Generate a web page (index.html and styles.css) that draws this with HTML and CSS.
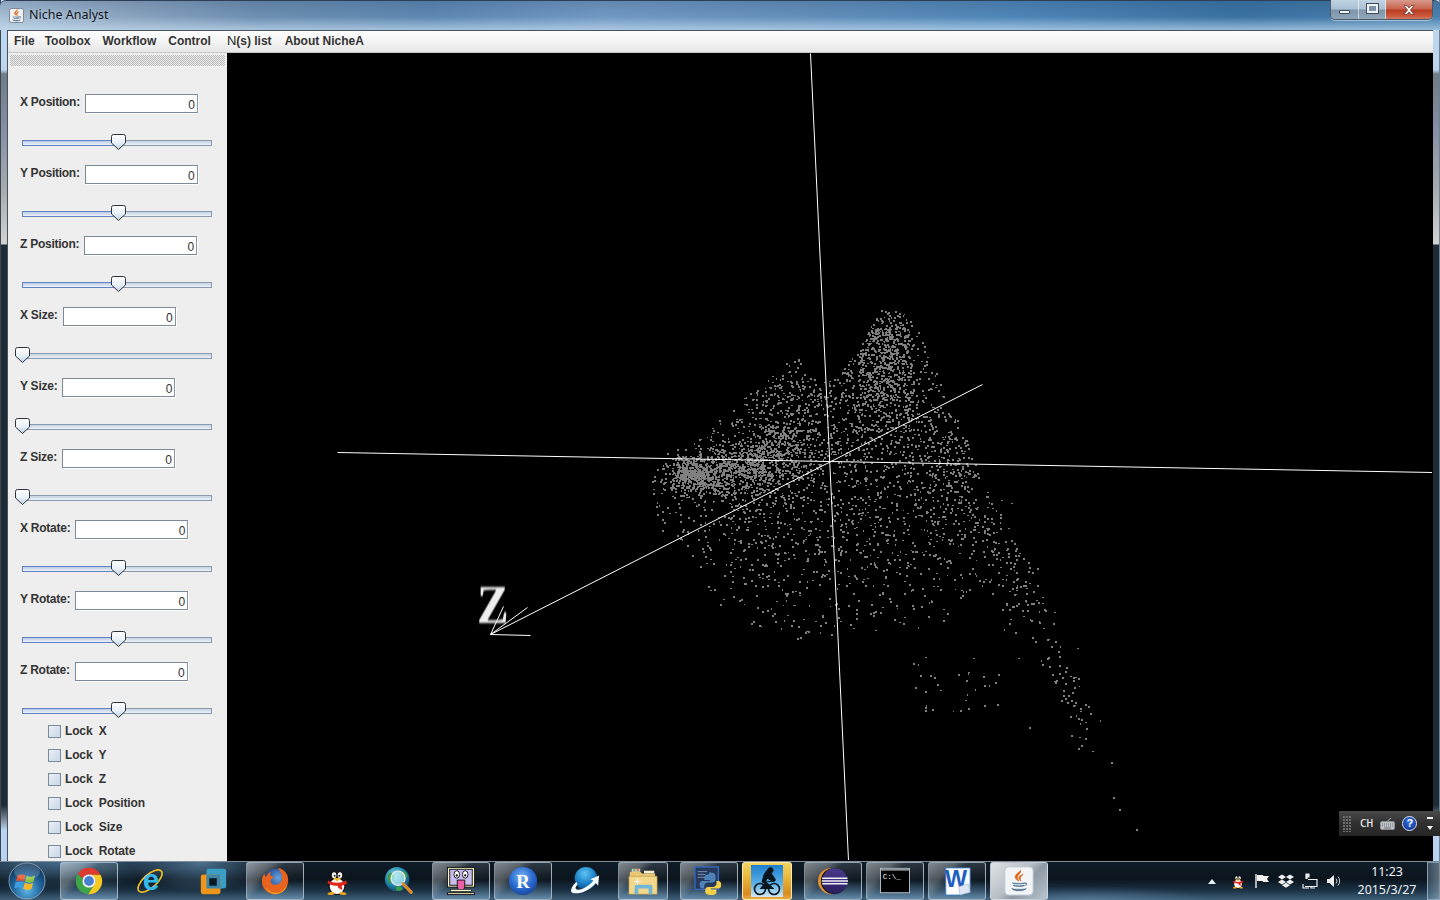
FILE: index.html
```html
<!DOCTYPE html>
<html lang="en">
<head>
<meta charset="utf-8">
<title>Niche Analyst</title>
<link rel="stylesheet" href="styles.css">
</head>
<body>
<svg class="defs" width="0" height="0" aria-hidden="true">
  <defs>
    <linearGradient id="thumbFill" x1="0" y1="0" x2="0" y2="1"><stop offset="0" stop-color="#ffffff"/><stop offset=".55" stop-color="#e8f0f8"/><stop offset="1" stop-color="#b9cde2"/></linearGradient>
    <symbol id="thumb" viewBox="0 0 15 16"><path d="M2.5.5h10a2 2 0 0 1 2 2v6.5L7.5 15.5.5 9V2.500a2 2 0 0 1 2-2z" fill="url(#thumbFill)" stroke="#2d3338"/></symbol>
    <symbol id="javaCup" viewBox="0 0 32 32">
      <path d="M18 3c1 4-5 6-4 10 .4 1.500 1.500 2.500 2 3-3-1-5-3.500-4.500-6 .6-3 5-4 6.500-7zM21 8c-2 2-4 3-3.500 6 .2 1 .8 1.600 1 2-2-1-3-2.500-2.500-4.500.5-2 3-3 5-3.500z" fill="#e2661a" stroke="#e2661a" stroke-width=".9"/>
      <path d="M8 18c4 1.200 12 1.200 15 0l-.5 1c-3 1-11 1-14-.1zM9 21c4 1 10 1 13.500 0l-.5 1c-3 .9-9 .9-12.500 0zM7 25c5 1.600 13 1.600 18 0-1 2-5 3-9 3s-8-1-9-3zM23 18.500c3-1 4 2 0 3.500l1-1c1.500-1 1-2.500-1-2z" fill="#44698c" stroke="#44698c" stroke-width=".5"/>
    </symbol>
    <symbol id="penguin" viewBox="3 0 26 31">
      <ellipse cx="16" cy="17" rx="10" ry="13" fill="#15151a"/>
      <ellipse cx="16" cy="21" rx="7.500" ry="8" fill="#fafafa"/>
      <ellipse cx="13" cy="9.500" rx="2.300" ry="3" fill="#fff"/><ellipse cx="19" cy="9.500" rx="2.300" ry="3" fill="#fff"/>
      <circle cx="13.500" cy="10" r="1" fill="#111"/><circle cx="18.500" cy="10" r="1" fill="#111"/>
      <path d="M12 12.500h8l-4 3.500z" fill="#f5b61a"/>
      <path d="M6.500 15c6 3 13 3 19 0l.8 3c-2 1.500-4 2-5.500 2.200l.7 4.500-4-2-1-2.300c-3.500 0-7-.8-10-2.400z" fill="#e0251b"/>
      <path d="M6 29c1-2.500 6-3 8-1 .3 1.800-6 3-8 1zM26 29c-1-2.500-6-3-8-1-.3 1.800 6 3 8 1z" fill="#f5a81a"/>
    </symbol>
  </defs>
</svg>

<div class="screen">
  <div class="window">
    <header class="titlebar">
      <svg class="title-icon" viewBox="0 0 16 16"><rect x=".5" y=".5" width="15" height="15" rx="2" fill="#eef0f2" stroke="#76818d"/><use href="#javaCup" x="0" y="0" width="16" height="16"/></svg>
      <span class="title-text">Niche Analyst</span>
      <div class="controls">
        <div class="ctl ctl-min"><span class="glyph-min"></span></div>
        <div class="ctl ctl-max"><span class="glyph-max"></span></div>
        <div class="ctl ctl-close"><svg width="16" height="12" viewBox="0 0 16 12"><path d="M3 1.500h3l2 2.500 2-2.500h3l-3.500 4.500 3.500 4.500h-3l-2-2.500-2 2.500h-3l3.500-4.500z" fill="#f4f4f4" stroke="#6d3a35" stroke-width=".8"/></svg></div>
      </div>
    </header>

    <div class="client">
      <nav class="menubar">
        <span class="menu-item">File</span>
        <span class="menu-item">Toolbox</span>
        <span class="menu-item">Workflow</span>
        <span class="menu-item">Control</span>
        <span class="menu-item menu-armed"><span class="menu-n">N</span>(s) list</span>
        <span class="menu-item">About NicheA</span>
      </nav>

      <div class="workarea">
        <aside class="panel">
          <div class="grip"></div>

          <div class="group"><div class="field"><span class="field-label">X Position:</span><div class="field-box">0</div></div><div class="slider slider-mid"><div class="track"><div class="fill"></div></div><svg class="thumb"><use href="#thumb"/></svg></div></div>
          <div class="group"><div class="field"><span class="field-label">Y Position:</span><div class="field-box">0</div></div><div class="slider slider-mid"><div class="track"><div class="fill"></div></div><svg class="thumb"><use href="#thumb"/></svg></div></div>
          <div class="group"><div class="field"><span class="field-label">Z Position:</span><div class="field-box">0</div></div><div class="slider slider-mid"><div class="track"><div class="fill"></div></div><svg class="thumb"><use href="#thumb"/></svg></div></div>
          <div class="group"><div class="field"><span class="field-label">X Size:</span><div class="field-box">0</div></div><div class="slider slider-start"><div class="track"></div><svg class="thumb"><use href="#thumb"/></svg></div></div>
          <div class="group"><div class="field"><span class="field-label">Y Size:</span><div class="field-box">0</div></div><div class="slider slider-start"><div class="track"></div><svg class="thumb"><use href="#thumb"/></svg></div></div>
          <div class="group"><div class="field"><span class="field-label">Z Size:</span><div class="field-box">0</div></div><div class="slider slider-start"><div class="track"></div><svg class="thumb"><use href="#thumb"/></svg></div></div>
          <div class="group"><div class="field"><span class="field-label">X Rotate:</span><div class="field-box">0</div></div><div class="slider slider-mid"><div class="track"><div class="fill"></div></div><svg class="thumb"><use href="#thumb"/></svg></div></div>
          <div class="group"><div class="field"><span class="field-label">Y Rotate:</span><div class="field-box">0</div></div><div class="slider slider-mid"><div class="track"><div class="fill"></div></div><svg class="thumb"><use href="#thumb"/></svg></div></div>
          <div class="group group-last"><div class="field"><span class="field-label">Z Rotate:</span><div class="field-box">0</div></div><div class="slider slider-mid"><div class="track"><div class="fill"></div></div><svg class="thumb"><use href="#thumb"/></svg></div></div>

          <div class="check"><span class="check-box"></span><span class="check-label">Lock  X</span></div>
          <div class="check"><span class="check-box"></span><span class="check-label">Lock  Y</span></div>
          <div class="check"><span class="check-box"></span><span class="check-label">Lock  Z</span></div>
          <div class="check"><span class="check-box"></span><span class="check-label">Lock  Position</span></div>
          <div class="check"><span class="check-box"></span><span class="check-label">Lock  Size</span></div>
          <div class="check"><span class="check-box"></span><span class="check-label">Lock  Rotate</span></div>
        </aside>

        <main class="scene">
          <canvas id="cloud" class="cloud" width="1205" height="807"></canvas>
          <span class="axis-label">Z</span>
        </main>
      </div>
    </div>
  </div>

  <footer class="taskbar">
    <div class="start">
      <svg viewBox="0 0 38 38" width="38" height="38">
        <defs><radialGradient id="orb" cx=".5" cy=".75" r=".75"><stop offset="0" stop-color="#5fb8e8"/><stop offset=".55" stop-color="#1d5f97"/><stop offset="1" stop-color="#0c2c4c"/></radialGradient></defs>
        <circle cx="19" cy="19" r="18" fill="url(#orb)" stroke="#a6c0d4" stroke-opacity=".7"/>
        <path d="M9.500 13.500c3-1.500 5.500-1.200 8 0l-1.500 6c-2.500-1.200-5-1.400-8-.2z" fill="#e8502a"/>
        <path d="M18.500 13.800c2.800 1.500 5.500 1.500 8.500 0l-1.600 6c-3 1.300-5.500 1.200-8.400-.2z" fill="#8ec23b"/>
        <path d="M7.700 20.300c3-1.200 5.500-1 8 .2l-1.500 6c-2.500-1.200-5-1.400-8-.2z" fill="#3c9fe0"/>
        <path d="M16.700 20.800c2.800 1.400 5.500 1.500 8.400.2l-1.600 6c-3 1.300-5.500 1.200-8.300-.2z" fill="#f6b72a"/>
        <ellipse cx="19" cy="9.500" rx="13" ry="8" fill="#fff" fill-opacity=".18"/>
      </svg>
    </div>
    <div class="tasks">
      <div class="task open"><svg class="icon" viewBox="0 0 32 32"><path d="M4 8.500A14 14 0 0 1 28.400 9.500L16 9A7 7 0 0 0 9.500 13.500z" fill="#dd3b2f"/><path d="M28.400 9.500A14 14 0 0 1 15 30L21.500 20A7 7 0 0 0 16 9z" fill="#f8c91f"/><path d="M4 8.500A14 14 0 0 0 15 30L21.500 20A7 7 0 0 1 9.500 13.500z" fill="#3da648"/><circle cx="16" cy="16" r="7" fill="#fff"/><circle cx="16" cy="16" r="5.300" fill="#4a80d0"/></svg></div>
      <div class="task"><svg class="icon" viewBox="0 0 32 32"><ellipse cx="15" cy="16" rx="16" ry="7" transform="rotate(-42 15 16)" fill="none" stroke="#f2bd22" stroke-width="1.800"/><text x="16" y="26" text-anchor="middle" class="ie-e">e</text></svg></div>
      <div class="task"><svg class="icon" viewBox="0 0 32 32"><rect x="9" y="3" width="21" height="21" rx="2.500" fill="#3a9fc6"/><rect x="3" y="9" width="21" height="21" rx="2.500" fill="#f0951c"/><rect x="9" y="9" width="15" height="15" fill="#3f87a8"/><rect x="12" y="13" width="8" height="8" fill="#0b1720"/></svg></div>
      <div class="task open"><svg class="icon" viewBox="0 0 32 32"><defs><radialGradient id="ffx" cx=".6" cy=".4" r=".7"><stop offset="0" stop-color="#6aa3dc"/><stop offset=".6" stop-color="#2b5da8"/><stop offset="1" stop-color="#1e3f80"/></radialGradient></defs><circle cx="17" cy="15" r="12" fill="url(#ffx)"/><path d="M19 2c7 1 12 7 11 15-1 8-7 13-14 13C8 30 2 24 2 16c0-3 1-6 3-8 0 2 .5 3 1.500 3.500C8 8 10 6.500 12 6c-1 1.500-1.500 3-1 4 2 .5 3.500 1.500 3.500 2.500-2 1-3.500 2-3 4 .5 2.500 3 4 6 3.500 3.500-.6 6-3.500 6-7 0-4.500-2-8-4.500-10.500z" fill="#e8641e"/><path d="M6 22c3 5 9 8 15 6 3-1 6-4 8-8-1 6-7 10-13 10-4 0-8-3-10-8z" fill="#f5a31c"/></svg></div>
      <div class="task"><svg class="icon"><use href="#penguin"/></svg></div>
      <div class="task"><svg class="icon" viewBox="0 0 32 32"><defs><radialGradient id="mag" cx=".4" cy=".35" r=".75"><stop offset="0" stop-color="#8be0ee"/><stop offset=".55" stop-color="#1d84ab"/><stop offset="1" stop-color="#0d3d5c"/></radialGradient></defs><circle cx="14" cy="14" r="13" fill="url(#mag)"/><path d="M4 9c3-3 6-2 7 1s-3 5-4 9c-3-2-4-6-3-10zM20 5c3 1 5 4 5 7l-5 1c-2-2-2-5 0-8zM13 22c3-1 6 0 7 3-2 1.500-5 2-7 1z" fill="#3c9c4a"/><circle cx="15" cy="13" r="7.500" fill="#bff0f6" fill-opacity=".7" stroke="#e4e9ea" stroke-width="1.500"/><path d="M20.500 19l8.500 9" stroke="#d98a30" stroke-width="3.500" stroke-linecap="round"/></svg></div>
      <div class="task open"><svg class="icon" viewBox="0 0 32 32"><rect x="1.500" y="1.500" width="29" height="21" fill="#fbf7c8" stroke="#111"/><rect x="4" y="3.500" width="24" height="17" fill="#c9bdf0" stroke="#111"/><ellipse cx="11.500" cy="9" rx="3" ry="4" fill="#fff" stroke="#111"/><ellipse cx="20.500" cy="9" rx="3" ry="4" fill="#fff" stroke="#111"/><circle cx="11.500" cy="10" r="1.200" fill="#111"/><circle cx="20.500" cy="10" r="1.200" fill="#111"/><path d="M12 15h8v7a4 4 0 0 1-8 0z" fill="#ec5fa4" stroke="#111"/><rect x="5" y="25" width="22" height="2" fill="#fbf7c8" stroke="#111" stroke-width=".6"/><rect x="1.500" y="28.500" width="29" height="2" fill="#fbf7c8" stroke="#111"/></svg></div>
      <div class="task open"><svg class="icon" viewBox="0 0 32 32"><defs><radialGradient id="rball" cx=".45" cy=".35" r=".75"><stop offset="0" stop-color="#79b6f2"/><stop offset=".55" stop-color="#2a68cf"/><stop offset="1" stop-color="#133c8e"/></radialGradient></defs><circle cx="16" cy="16" r="15" fill="url(#rball)"/><text x="16" y="23" text-anchor="middle" class="r-letter">R</text></svg></div>
      <div class="task"><svg class="icon" viewBox="0 0 32 32"><defs><radialGradient id="sph" cx=".45" cy=".3" r=".75"><stop offset="0" stop-color="#5fc4f2"/><stop offset=".6" stop-color="#1a7fc8"/><stop offset="1" stop-color="#0c4a80"/></radialGradient></defs><circle cx="17" cy="13" r="12" fill="url(#sph)"/><path d="M1 26c1-4 3-7 6-9l1 3c-1.500 1-2 2.500-2 3.500 0 2 3 2.500 7 1 4-1.500 9-5 12-9l-3.500-1.500L31 10l-1 11-2.500-3c-4 5-10 9-16 10.500C5 30 1 29 1 26z" fill="#f6fbfe"/></svg></div>
      <div class="task open task-narrow"><svg class="icon" viewBox="0 0 32 32"><path d="M2 6h11l2 2h14v5H2z" fill="#e9c876"/><rect x="4" y="3" width="9" height="3" fill="#f4eccb"/><rect x="5" y="3.500" width="3" height="1.500" fill="#3aa657"/><rect x="9" y="3.500" width="3" height="1.500" fill="#d8483a"/><rect x="17" y="5" width="11" height="3" fill="#f4eccb"/><path d="M1 11h30v19H1z" fill="#f2d88a" stroke="#c69c4a" stroke-width=".7"/><path d="M7 30v-8c0-1 1-2 2-2h15c1 0 2 1 2 2v8h-4v-6H11v6z" fill="#74b6d8"/><path d="M10 13v7M6.500 16.500h7" stroke="#fff" stroke-width="1"/></svg></div>
      <div class="task open task-group"><svg class="icon" viewBox="0 0 32 32"><rect x="1" y="1" width="25" height="24" fill="#283a5c" stroke="#3569bb" stroke-width="1.500"/><path d="M4 6h10M4 9h8M4 12h12" stroke="#7a93b3"/><path d="M16 9c-4 0-5 1.500-5 3.500V15h6v1H9c-2 0-3 1.500-3 4s1 4 3 4h2v-3c0-2 2-3.500 4-3.500h5c1.500 0 3-1.300 3-3v-4c0-2-2-3.500-7-3.500z" fill="#4d83b8"/><path d="M19 31c4 0 5-1.500 5-3.500V25h-6v-1h8c2 0 3-1.500 3-4s-1-4-3-4h-2v3c0 2-2 3.500-4 3.500h-5c-1.500 0-3 1.300-3 3v2c0 2 2 3.500 7 3.500z" fill="#f4cf4a"/></svg></div>
      <div class="task active task-narrow"><svg class="icon icon-square" viewBox="0 0 32 32"><defs><linearGradient id="sky" x1="0" y1="0" x2="0" y2="1"><stop offset="0" stop-color="#1c7fcf"/><stop offset=".6" stop-color="#5fb3e6"/><stop offset="1" stop-color="#d2e8f2"/></linearGradient></defs><rect width="32" height="32" fill="url(#sky)"/><circle cx="9" cy="24" r="5.500" fill="none" stroke="#08141e" stroke-width="1.600"/><circle cx="23" cy="24" r="5.500" fill="none" stroke="#08141e" stroke-width="1.600"/><path d="M9 24l6-7 8 7M15 17l7-1M18 3c2-1 4 0 4 2s-1 3-2 3l4 6c1 2-1 3-3 2l-5-3-2 5-3-1 2-7c.5-2 2-3 5-7z" fill="#08141e" stroke="#08141e"/></svg></div>
      <div class="task open task-group"><svg class="icon" viewBox="0 0 32 32"><defs><linearGradient id="ecl" x1="0" y1="0" x2="0" y2="1"><stop offset="0" stop-color="#4a3a8c"/><stop offset="1" stop-color="#2a1f5c"/></linearGradient></defs><circle cx="14" cy="16" r="14" fill="#e8932a"/><circle cx="17" cy="16" r="14" fill="#0f1a24"/><circle cx="18" cy="16" r="13.500" fill="url(#ecl)"/><path d="M4.500 13h27M4 16h28M4.500 19h27" stroke="#f2f0fa" stroke-width="1.500"/></svg></div>
      <div class="task open"><svg class="icon" viewBox="0 0 32 32"><rect x=".5" y="2.500" width="31" height="26" fill="#000" stroke="#b9c2cc"/><rect x="1" y="3" width="30" height="2" fill="#8a939c"/><text x="3" y="14" class="cmd-text">C:\_</text></svg></div>
      <div class="task open"><svg class="icon" viewBox="0 0 32 32"><path d="M4 2h26v26L18 31H4z" fill="#fdfdfd" stroke="#3e7ac6"/><text x="15" y="22" text-anchor="middle" class="word-w">W</text><path d="M18 22l10-3 2 9-11 3z" fill="#dfe7f2" stroke="#9fb2c9" stroke-width=".6"/></svg></div>
      <div class="task open task-light"><svg class="icon" viewBox="0 0 32 32"><rect x="1" y="1" width="30" height="30" rx="4" fill="#f2f4f6" stroke="#c0ccd8"/><use href="#javaCup" x="2" y="2" width="28" height="28"/></svg></div>
    </div>

    <div class="tray">
      <svg class="tray-arrow" width="8" height="5" viewBox="0 0 8 5"><path d="M4 0l4 5H0z" fill="#e9eef2"/></svg>
      <svg class="tray-icon"><use href="#penguin"/></svg>
      <svg class="tray-icon" viewBox="0 0 16 16"><path d="M2 1v14" stroke="#f2f2f2" stroke-width="1.400"/><path d="M3 2h6l.5 1H15l-2 3 2 3H9l-.5-1H3z" fill="#f2f2f2"/></svg>
      <svg class="tray-icon" viewBox="0 0 16 16"><path d="M4 1.500l4 2.500-4 2.500L0 4zM12 1.500L16 4l-4 2.500L8 4zM4 6.500L8 9l-4 2.500L0 9zM12 6.500L16 9l-4 2.500L8 9zM4 12.200l4-2.400 4 2.400-4 2.500z" fill="#f0f0f0"/></svg>
      <svg class="tray-icon" viewBox="0 0 16 16"><path d="M4 6V1h3v1h-2v1h2v1h-2v2M6 6.500h9v7H3" fill="none" stroke="#f0f0f0" stroke-width="1.200"/><path d="M1 11v4h6M9 13.500V15h4" stroke="#f0f0f0" stroke-width="1.200" fill="none"/></svg>
      <svg class="tray-icon" viewBox="0 0 16 16"><path d="M1 6h2.500L8 2v12l-4.500-4H1z" fill="#f0f0f0"/><path d="M10 5.500a4 4 0 0 1 0 5M12 3.500a7 7 0 0 1 0 9" fill="none" stroke="#c9ced2" stroke-width="1"/></svg>
    </div>
    <div class="clock"><span>11:23</span><span>2015/3/27</span></div>
    <div class="show-desktop"></div>
  </footer>

  <div class="ime">
    <span class="ime-grip"></span>
    <span class="ime-lang">CH</span>
    <svg class="ime-kb" width="15" height="13" viewBox="0 0 15 13"><path d="M8 4c0-2 2-1 3-3" fill="none" stroke="#aaa"/><rect x=".5" y="4.500" width="14" height="8" rx="1.500" fill="#bfc3c6" stroke="#8a8e91"/><path d="M2 7h11M2 9h11" stroke="#6d7174" stroke-dasharray="1 1"/><path d="M4 11h7" stroke="#6d7174"/></svg>
    <span class="ime-help">?</span>
    <span class="ime-side"><span class="ime-dash"></span><svg width="6" height="4" viewBox="0 0 6 4"><path d="M0 0h6L3 4z" fill="#f0f0f0"/></svg></span>
  </div>
</div>
<script src="app.js"></script>
</body>
</html>
```
FILE: styles.css
```css
* { box-sizing: border-box; }
html, body { margin: 0; padding: 0; height: 100%; background: #000; overflow: hidden; }
.defs { position: absolute; }
.screen { position: relative; width: 1440px; height: 900px; display: flex; flex-direction: column; overflow: hidden; font-family: "Liberation Sans", Arial, sans-serif; }

/* window frame */
.window {
  height: 861px; display: flex; flex-direction: column;
  padding: 0 6px 0 6px;
  border-left: 1px solid #3c4650; border-right: 1px solid #6f8090;
  background: linear-gradient(180deg, #bcd6f0 0, #bcd6f0 70px, #6f7b86 74px, #868fa3 130px, #a8acb0 190px, #d2d2d2 244px, #1d2b36 245px, #1d2b36 805px, #7f8c9c 820px, #b8d4f0 830px, #b8d4f0 861px);
}
.titlebar {
  height: 30px; margin: 0 -7px 0 -7px; padding-left: 9px; flex: none;
  display: flex; align-items: flex-start; position: relative;
  border-radius: 6px 6px 0 0;
  border-top: 1px solid #2c3f55;
  background:
    linear-gradient(180deg, rgba(30,55,90,.18) 0, rgba(0,0,0,0) 55%, rgba(205,228,246,.62) 100%),
    linear-gradient(90deg, #a7bed4 0, #8ba4bf 9%, #6d8fb2 18%, #5d88b1 30%, #7199c2 42%, #6490ba 55%, #4f86b8 70%, #3a72a3 86%, #4a80ae 100%);
}
.title-icon { width: 15px; height: 15px; margin-top: 7px; flex: none; }
.title-text { margin: 5px 0 0 5px; font: 12.5px/18px "Noto Sans", "Open Sans", sans-serif; color: #10161c; text-shadow: 0 0 4px rgba(230,240,250,.55); }
.controls { margin-left: auto; margin-right: 7px; display: flex; height: 20px; margin-top: -1px; border: 1px solid #4c5a68; border-top: 0; border-radius: 0 0 5px 5px; overflow: hidden; box-shadow: 0 1px 0 rgba(255,255,255,.45); }
.ctl { display: flex; align-items: center; justify-content: center; height: 100%; border-right: 1px solid rgba(255,255,255,.55); }
.ctl-min { width: 28px; background: linear-gradient(180deg, #c0d3e3 0, #a9c0d3 48%, #7d95aa 52%, #8da5b8 100%); }
.ctl-max { width: 27px; background: linear-gradient(180deg, #c3d4e3 0, #abc0d0 48%, #7f95a8 52%, #93a9ba 100%); }
.ctl-close { width: 46px; border-right: 0; background: linear-gradient(180deg, #d79a8c 0, #c9624c 48%, #b63a22 52%, #cf5a3c 85%, #c97a66 100%); }
.glyph-min { width: 11px; height: 4px; margin-top: 5px; background: #f3f5f7; border: 1px solid #3f4c59; border-radius: 1px; }
.glyph-max { width: 11px; height: 9px; margin-top: -2px; border: 2px solid #eef2f5; outline: 1px solid #3f4c59; background: #7e93a8; }

.client { flex: 1; min-height: 0; display: flex; flex-direction: column; border-left: 1px solid #48525c; border-top: 1px solid #48525c; background: #eee; }
.menubar {
  height: 22px; flex: none; display: flex; align-items: center; padding-bottom: 2px;
  background: linear-gradient(180deg, #fdfdfd 0, #f4f4f4 50%, #e6e6e6 100%);
  border-bottom: 1px solid #c6c6c6;
  font-weight: 700; font-size: 12px; color: #333;
}
.menu-item { padding: 0 6px; white-space: nowrap; }
.menu-item:first-child { padding-right: 4px; }
.menu-armed { margin-left: 4px; padding-right: 7px; }
.menu-n { font-weight: 400; font-size: 13px; color: #222; }

.workarea { flex: 1; min-height: 0; display: flex; }
.panel { width: 219px; flex: none; background: #eeeeee; padding-left: 12px; overflow: hidden; font-size: 12px; font-weight: 700; color: #333; }
.grip {
  height: 11px; margin: 2px 2px 28px -10px; width: 215px;
  background-image: conic-gradient(#b8b8b8 25%, #eeeeee 0 50%, #b8b8b8 0 75%, #eeeeee 0);
  background-size: 2px 2px;
}
.group { height: 71px; }
.group-last { height: 57px; }
.field { display: flex; align-items: center; height: 19px; }
.field-label { white-space: nowrap; margin-top: -3px; letter-spacing: -.25px; }
.field-box {
  width: 113px; height: 19px; margin-left: 5px; padding: 3px 2px 0 0;
  background: #fff; border: 1px solid #7a8a99; border-right-color: #8995a2; box-shadow: 1px 1px 0 #fff;
  text-align: right; font-weight: 400; font-size: 12px; line-height: 15px; color: #333;
}
.slider { position: relative; width: 190px; height: 16px; margin: 21px 0 0 2px; }
.track { position: absolute; left: 0; right: 0; top: 6px; height: 6px; border: 1px solid #8a9bb0; background: linear-gradient(180deg, #c3d3e4 0, #eef2f7 100%); }
.fill { width: 50%; height: 6px; margin: -1px 0 0 -1px; border: 1px solid #6382bf; background: linear-gradient(180deg, #b8cbe6 0, #eef3fa 100%); }
.thumb { position: absolute; top: 0; width: 15px; height: 16px; }
.slider-mid .thumb { left: 89px; }
.slider-start .thumb { left: -7px; }
.check { display: flex; align-items: center; height: 24px; padding-left: 28px; }
.check-box { width: 13px; height: 13px; flex: none; border: 1px solid #7a8a99; background: linear-gradient(135deg, #eaf0f7 0, #c7d6e7 100%); }
.check-label { margin-left: 4px; white-space: pre; letter-spacing: -.15px; }

.scene { flex: 1; min-width: 0; position: relative; background: #000; overflow: hidden; }
.cloud { display: block; }
.axis-label { position: absolute; left: 250px; top: 522px; font: 700 54px/60px "Liberation Serif", serif; color: #eee; filter: blur(.8px); transform: scaleX(.88); transform-origin: 0 0; }

/* taskbar */
.taskbar {
  height: 39px; flex: none; display: flex; align-items: stretch; position: relative;
  border-top: 1px solid #7e8e9d;
  background:
    radial-gradient(ellipse 130px 26px at 60px 0, rgba(90,140,180,.7) 0, rgba(90,140,180,0) 100%),
    radial-gradient(ellipse 70px 30px at 200px 0, rgba(110,160,200,.65) 0, rgba(110,160,200,0) 100%),
    radial-gradient(ellipse 120px 14px at 1090px 100%, rgba(110,150,185,.45) 0, rgba(110,150,185,0) 100%),
    linear-gradient(180deg, #0f1c28 0, #0a141d 45%, #1c3245 75%, #3f6079 100%);
}
.start { width: 60px; flex: none; padding: 0 0 0 8px; display: flex; align-items: center; }
.tasks { display: flex; gap: 4px; align-items: stretch; padding-top: 0; }
.task { width: 58px; flex: none; display: flex; align-items: center; justify-content: center; border-radius: 3px; }
.task-narrow { width: 50px; }
.task-group { margin-left: 8px; }
.icon { width: 30px; height: 30px; display: block; }
.icon-square { width: 32px; height: 32px; }
.task.open, .task.active, .task.task-light {
  border: 1px solid rgba(212,222,232,.55);
  background:
    linear-gradient(135deg, rgba(255,255,255,.42) 0, rgba(255,255,255,.26) 28%, rgba(255,255,255,.03) 42%, rgba(255,255,255,0) 100%),
    linear-gradient(180deg, rgba(255,255,255,.1) 0, rgba(255,255,255,0) 50%, rgba(140,190,230,.45) 100%);
}
.task.active { background: linear-gradient(180deg, #f3d35f 0, #e8b83c 40%, #d98a1f 85%, #ecab46 100%); border-color: rgba(255,240,190,.9); }
.task.task-light { background: linear-gradient(135deg, #dfe3e6 0, #b7bec4 45%, #8f9aa4 60%, #b7c5d2 100%); }
.ie-e { font: 700 32px "Liberation Sans", sans-serif; fill: #35b8ec; }
.r-letter { font: 700 20px "Liberation Serif", serif; fill: #fff; }
.cmd-text { font: 8px "Liberation Mono", monospace; fill: #fff; }
.word-w { font: 700 25px "Liberation Sans", sans-serif; fill: #1f5fc0; }

.tray { margin-left: auto; display: flex; align-items: center; gap: 8px; }
.tray-arrow { margin-right: 6px; }
.tray-icon { width: 16px; height: 16px; display: block; }
.clock { width: 80px; margin-left: 5px; padding-top: 1px; display: flex; flex-direction: column; align-items: center; font: 12.4px/18px "Noto Sans", "Open Sans", sans-serif; color: #eef2f5; }
.show-desktop { width: 13px; flex: none; border: 1px solid rgba(190,205,220,.5); background: linear-gradient(90deg, rgba(120,150,175,.4), rgba(170,195,215,.5)); }

/* language bar floats over the window */
.ime { position: absolute; left: 1339px; top: 811px; width: 101px; height: 25px; display: flex; align-items: center; background: linear-gradient(180deg, #4a4a4a 0, #303030 50%, #262626 100%); }
.ime-grip { width: 8px; height: 16px; margin-left: 4px; background-image: radial-gradient(circle at 1px 1px, #6e6e6e 0, #6e6e6e .8px, rgba(0,0,0,0) 1px); background-size: 3px 3px; }
.ime-lang { margin-left: 9px; font: 11px "DejaVu Sans Mono", "Liberation Mono", monospace; color: #f4f4f4; }
.ime-kb { margin-left: 7px; }
.ime-help { width: 15px; height: 15px; margin-left: 7px; border-radius: 50%; border: 1px solid #dbe4f2; background: radial-gradient(circle at 50% 35%, #3570dc, #0c2a8c); color: #fff; font: 700 11px/13px "Liberation Sans", sans-serif; text-align: center; }
.ime-side { margin-left: 10px; display: flex; flex-direction: column; align-items: center; gap: 7px; }
.ime-dash { width: 6px; height: 2px; background: #f0f0f0; }
```
FILE: app.js
```js
(function () {
  var canvas = document.getElementById('cloud');
  var ctx = canvas.getContext('2d');
  var OX = 227, OY = 53;
  var seed = 20150327;
  function rnd() {
    seed |= 0; seed = seed + 0x6D2B79F5 | 0;
    var t = Math.imul(seed ^ seed >>> 15, 1 | seed);
    t = t + Math.imul(t ^ t >>> 7, 61 | t) ^ t;
    return ((t ^ t >>> 14) >>> 0) / 4294967296;
  }
  function gauss() { return (rnd() + rnd() + rnd() + rnd() - 2) * 1.73; }
  function inside(poly, x, y) {
    var c = false;
    for (var i = 0, j = poly.length - 1; i < poly.length; j = i++) {
      var a = poly[i], b = poly[j];
      if ((a[1] > y) !== (b[1] > y) && x < (b[0] - a[0]) * (y - a[1]) / (b[1] - a[1]) + a[0]) c = !c;
    }
    return c;
  }
  var hull = [[650,482],[668,446],[700,438],[750,392],[795,355],[812,378],[835,378],[860,345],[880,310],[900,310],[920,332],[942,385],[968,445],[990,495],[1015,540],[1045,600],[1066,650],[1088,700],[1102,722],[1088,735],[1060,695],[1025,655],[1000,640],[960,625],[900,625],[860,635],[810,640],[785,645],[745,625],[715,600],[690,555],[658,528]];
  var lower = [[690,520],[820,500],[1000,500],[1045,620],[960,625],[880,630],[810,640],[785,645],[745,625],[715,600]];
  var dots = [];
  function add(x, y) { dots.push([x, y]); }
  function uniform(poly, n, x0, y0, x1, y1) {
    var c = 0, guard = 0;
    while (c < n && guard < n * 80) {
      guard++;
      var x = x0 + rnd() * (x1 - x0), y = y0 + rnd() * (y1 - y0);
      if (inside(poly, x, y)) {
        /* the cloud thins out smoothly towards its lower edge */
        var keep = y < 560 ? 1 : Math.max(0.22, 1 - (y - 560) / 80);
        if (rnd() < keep) { add(x, y); c++; }
      }
    }
  }
  function blob(cx, cy, sx, sy, n, rot) {
    var cr = Math.cos(rot || 0), sr = Math.sin(rot || 0);
    for (var i = 0; i < n; i++) {
      var a = gauss() * sx, b = gauss() * sy;
      var x = cx + a * cr - b * sr, y = cy + a * sr + b * cr;
      if (inside(hull, x, y)) add(x, y);
    }
  }
  uniform(hull, 1150, 650, 310, 1100, 735);
  uniform(lower, 170, 690, 500, 1040, 645);
  blob(692, 473, 11, 9, 340);
  blob(735, 468, 30, 12, 560, -0.15);
  blob(770, 448, 18, 9, 170, -0.8);
  blob(760, 470, 50, 20, 320, -0.1);
  blob(878, 365, 16, 28, 500, 0.1);
  blob(892, 335, 14, 14, 140);
  blob(900, 410, 32, 35, 340);
  blob(950, 470, 18, 28, 170);
  blob(810, 420, 26, 32, 220);
  blob(780, 415, 25, 26, 170);
  blob(880, 510, 70, 25, 200);
  for (var i = 0; i < 110; i++) {
    var t = rnd(), px = 985 + t * 100, py = 510 + t * 210;
    add(px + gauss() * (14 - t * 6), py + gauss() * 9);
  }
  for (var k = 0; k < 28; k++) add(915 + rnd() * 90, 655 + rnd() * 58);
  [[1081,745],[1092,751],[1085,738],[1111,762],[1113,797],[1119,809],[1136,829],[1078,748],[1100,720],[1029,727],[1018,658],[913,663],[915,687],[953,711],[968,708]].forEach(function (d) { add(d[0], d[1]); });

  ctx.fillStyle = '#808080';
  dots.forEach(function (d) {
    var w = rnd() < 0.85 ? 2 : 1, h = rnd() < 0.75 ? 2 : 1;
    ctx.fillRect(Math.round(d[0]) - OX, Math.round(d[1]) - OY, w, h);
  });

  ctx.strokeStyle = '#ffffff';
  ctx.lineWidth = 1;
  [
    [810, 53, 848, 860],
    [337, 452, 1432, 472],
    [982, 384, 490, 634],
    [490, 634, 530, 635],
    [490, 634, 527, 607],
    [490, 634, 503, 606]
  ].forEach(function (l) {
    ctx.beginPath();
    ctx.moveTo(l[0] - OX + 0.5, l[1] - OY + 0.5);
    ctx.lineTo(l[2] - OX + 0.5, l[3] - OY + 0.5);
    ctx.stroke();
  });
})();
```
